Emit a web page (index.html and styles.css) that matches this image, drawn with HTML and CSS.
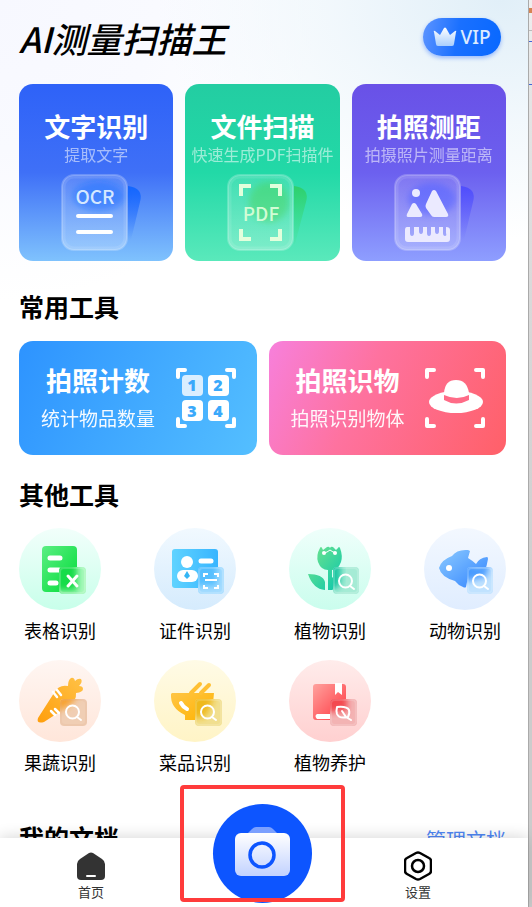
FILE: index.html
```html
<!DOCTYPE html>
<html lang="zh-CN">
<head>
<meta charset="utf-8">
<meta name="viewport" content="width=device-width, initial-scale=1">
<title>AI测量扫描王</title>
<link rel="stylesheet" href="styles.css">
</head>
<body>
<svg class="defs" aria-hidden="true">
  <defs>
    <filter id="soft" x="-30%" y="-30%" width="160%" height="160%"><feGaussianBlur stdDeviation="3"/></filter>
    <linearGradient id="crown" x1="0" y1="0" x2="0" y2="1"><stop offset="0" stop-color="#fff"/><stop offset="1" stop-color="#a9cffd"/></linearGradient>
    <linearGradient id="glass" x1="0" y1="0" x2="0" y2="1"><stop offset="0" stop-color="#fff" stop-opacity=".12"/><stop offset="1" stop-color="#fff" stop-opacity=".24"/></linearGradient>
    <linearGradient id="sheetBlue" x1="0" y1="0" x2="0" y2="1"><stop offset="0" stop-color="#1266ff"/><stop offset="1" stop-color="#1a66ff" stop-opacity="0"/></linearGradient>
    <linearGradient id="sheetGreen" x1="0" y1="0" x2="0" y2="1"><stop offset="0" stop-color="#2ed06b"/><stop offset="1" stop-color="#40de86" stop-opacity=".1"/></linearGradient>
    <linearGradient id="sheetViolet" x1="0" y1="0" x2="0" y2="1"><stop offset="0" stop-color="#4f4dfd"/><stop offset="1" stop-color="#5a5cff" stop-opacity="0"/></linearGradient>
    <linearGradient id="green" x1="0" y1="0" x2="1" y2="1"><stop offset="0" stop-color="#5cee83"/><stop offset="1" stop-color="#00dc37"/></linearGradient>
    <linearGradient id="sky" x1="0" y1="0" x2="1" y2="0"><stop offset="0" stop-color="#60d3ff"/><stop offset="1" stop-color="#38b5ff"/></linearGradient>
    <linearGradient id="plant" x1="0" y1="0" x2="1" y2="1"><stop offset="0" stop-color="#76e58b"/><stop offset="1" stop-color="#08c6ad"/></linearGradient>
    <linearGradient id="fish" x1="0" y1="0" x2="1" y2="1"><stop offset="0" stop-color="#8ccaff"/><stop offset="1" stop-color="#3284ff"/></linearGradient>
    <linearGradient id="orange" x1="1" y1="0" x2="0" y2="1"><stop offset="0" stop-color="#ffc247"/><stop offset="1" stop-color="#ff9e0c"/></linearGradient>
    <linearGradient id="amber" x1="0" y1="0" x2="1" y2="1"><stop offset="0" stop-color="#ffc545"/><stop offset="1" stop-color="#ffb300"/></linearGradient>
    <linearGradient id="red" x1="0" y1="0" x2="1" y2="1"><stop offset="0" stop-color="#ffa29e"/><stop offset="1" stop-color="#ff3640"/></linearGradient>
    <linearGradient id="camera" x1="0" y1="0" x2="0" y2="1"><stop offset="0" stop-color="#fff"/><stop offset="1" stop-color="#c2d2ff"/></linearGradient>
    <clipPath id="badgeClip"><rect x="41" y="39" width="27" height="27" rx="4"/></clipPath>
    <clipPath id="badgeClipLeft"><rect x="40" y="39" width="27" height="27" rx="4"/></clipPath>
    <clipPath id="badgeClipMid"><rect x="43" y="39" width="26" height="27" rx="4"/></clipPath>
    <clipPath id="badgeClipRight"><rect x="44" y="39" width="26" height="27" rx="4"/></clipPath>
    <g id="magnifier" fill="none" stroke="#fff" stroke-width="2" stroke-linecap="round"><circle cx="53.500" cy="52" r="6.500"/><path d="M58 57l4 3"/></g>
    <g id="corners" fill="none" stroke="#fff" stroke-width="4" stroke-linecap="round" stroke-linejoin="round"><path d="M2 9V2h7M51 2h7v7M58 51v7h-7M9 58H2v-7"/></g>
  </defs>
</svg>

<div class="window">
  <div class="app">
    <main class="content">
      <header class="header">
        <h1 class="brand">AI测量扫描王</h1>
        <button class="vip" type="button">
          <svg width="24" height="20" viewBox="0 0 24 20" aria-hidden="true"><path d="M1 5Q0 3 2 4L7 8 11 1q1-1 2 0l4 7 5-4q2-1 1 1l-2 12q0 2-2 2H5q-2 0-2-2z" fill="url(#crown)"/></svg>
          <span>VIP</span>
        </button>
      </header>

      <section class="features">
        <button class="feature feature-ocr" type="button">
          <span class="card-title">文字识别</span>
          <span class="feature-note">提取文字</span>
          <svg class="feature-icon" width="70" height="77" viewBox="0 0 70 77" aria-hidden="true">
            <path d="M67 12q16 2 12 16l-9 38h-3z" fill="url(#sheetBlue)"/>
            <ellipse cx="38" cy="22" rx="26" ry="15" fill="#0864ff" opacity=".7" filter="url(#soft)"/>
            <rect x="1" y="1" width="65" height="75" rx="12" fill="url(#glass)" stroke="#fff" stroke-opacity=".22" stroke-width="2"/>
            <rect x="3" y="3" width="61" height="71" rx="10" fill="none" stroke="#fff" stroke-opacity=".1" stroke-width="3"/>
            <text x="34" y="30" class="glyph-text">OCR</text>
            <path d="M17 42h33M17 58h33" stroke="#fff" stroke-width="4" stroke-linecap="round"/>
          </svg>
        </button>
        <button class="feature feature-scan" type="button">
          <span class="card-title">文件扫描</span>
          <span class="feature-note">快速生成PDF扫描件</span>
          <svg class="feature-icon" width="70" height="77" viewBox="0 0 70 77" aria-hidden="true">
            <path d="M67 12q16 2 12 16l-11 42h-1z" fill="url(#sheetGreen)"/>
            <ellipse cx="42" cy="28" rx="20" ry="20" fill="#2bd262" opacity=".7" filter="url(#soft)"/>
            <rect x="1" y="1" width="65" height="75" rx="12" fill="url(#glass)" stroke="#fff" stroke-opacity=".22" stroke-width="2"/>
            <rect x="3" y="3" width="61" height="71" rx="10" fill="none" stroke="#fff" stroke-opacity=".1" stroke-width="3"/>
            <path d="M14 22V12h10M43 12h10v10M53 55v10H43M24 65H14V55" fill="none" stroke="#e2ffdc" stroke-width="4"/>
            <text x="34" y="47" class="glyph-text glyph-green">PDF</text>
          </svg>
        </button>
        <button class="feature feature-measure" type="button">
          <span class="card-title">拍照测距</span>
          <span class="feature-note">拍摄照片测量距离</span>
          <svg class="feature-icon" width="70" height="77" viewBox="0 0 70 77" aria-hidden="true">
            <path d="M67 12q16 2 12 16l-9 38h-3z" fill="url(#sheetViolet)"/>
            <ellipse cx="38" cy="25" rx="24" ry="16" fill="#4250ff" opacity=".7" filter="url(#soft)"/>
            <rect x="1" y="1" width="65" height="75" rx="12" fill="url(#glass)" stroke="#fff" stroke-opacity=".22" stroke-width="2"/>
            <rect x="3" y="3" width="61" height="71" rx="10" fill="none" stroke="#fff" stroke-opacity=".1" stroke-width="3"/>
            <g fill="#ebeaff"><circle cx="22" cy="19" r="4"/><path d="M18 30q2-2 4 0l6 10q1 3-2 3H14q-2 0-1-3zM38 17q2-2 4 0l12 23q1 3-2 3H40q-2 0-3-2l-5-7q-1-2 0-4z"/><path d="M13 53h3v6q0 3 2 3t2-3v-6h5v4q0 3 2 3t2-3v-4h4v6q0 3 2 3t2-3v-6h4v4q0 3 2 3t2-3v-4h4v6q0 3 2 3t1-3v-6q4 0 4 3v9q0 3-3 3H14q-3 0-3-3v-9q0-3 2-3z"/></g>
          </svg>
        </button>
      </section>

      <h2 class="section-title">常用工具</h2>
      <section class="commons">
        <button class="common common-count" type="button">
          <span class="common-text"><span class="card-title">拍照计数</span><span class="common-note">统计物品数量</span></span>
          <svg width="60" height="60" viewBox="0 0 60 60" aria-hidden="true">
            <use href="#corners"/>
            <g fill="#fff"><rect x="6" y="7" width="21" height="21" rx="4" fill="#d9eeff"/><rect x="32" y="7" width="21" height="21" rx="4"/><rect x="6" y="32" width="21" height="21" rx="4"/><rect x="32" y="32" width="21" height="21" rx="4"/></g>
            <g class="count-digits"><text x="16" y="23">1</text><text x="42" y="23">2</text><text x="16" y="49">3</text><text x="42" y="49">4</text></g>
          </svg>
        </button>
        <button class="common common-object" type="button">
          <span class="common-text"><span class="card-title">拍照识物</span><span class="common-note">拍照识别物体</span></span>
          <svg width="60" height="60" viewBox="0 0 60 60" aria-hidden="true">
            <use href="#corners"/>
            <ellipse cx="31" cy="34" rx="27" ry="11" fill="#fff"/>
            <path d="M19 25v7q12 7 25 0v-7z" fill="#ff6b87"/>
            <path d="M19 25q1-13 12-13t13 13v2q-12 6-25 0z" fill="#fff"/>
          </svg>
        </button>
      </section>

      <h2 class="section-title">其他工具</h2>
      <section class="tools">
        <button class="tool" type="button">
          <svg class="disc disc-mint" viewBox="0 0 82 82" aria-hidden="true">
            <rect x="23" y="18" width="35" height="46" rx="4" fill="url(#green)"/>
            <path d="M31 30h10M31 42h9M31 55h6" stroke="#fff" stroke-width="5" stroke-linecap="round"/>
            <rect x="40" y="39" width="27" height="27" rx="4" fill="#a6f8ba"/>
            <g clip-path="url(#badgeClipLeft)"><rect x="36" y="34" width="22" height="29" fill="#18dc49" filter="url(#soft)"/></g>
            <rect x="41" y="40" width="25" height="25" rx="4" fill="none" stroke="#fff" stroke-opacity=".18" stroke-width="2"/>
            <path d="M49 48l9 10M58 48l-9 10" stroke="#fff" stroke-width="3" stroke-linecap="round"/>
          </svg>
          <span>表格识别</span>
        </button>
        <button class="tool" type="button">
          <svg class="disc disc-sky" viewBox="0 0 82 82" aria-hidden="true">
            <rect x="18" y="21" width="46" height="39" rx="3" fill="url(#sky)"/>
            <circle cx="33" cy="34" r="6" fill="#fff"/><rect x="23" y="42" width="21" height="12" rx="6" fill="#fff"/>
            <path d="M33 43l3 5-3 3-3-3z" fill="#35b6f5"/><path d="M47 33h10" stroke="#fff" stroke-width="5" stroke-linecap="round"/>
            <rect x="44" y="39" width="26" height="27" rx="4" fill="#a5dcff"/>
            <g clip-path="url(#badgeClipRight)"><rect x="40" y="34" width="23" height="24" fill="#55bfff" filter="url(#soft)"/></g>
            <rect x="45" y="40" width="24" height="25" rx="4" fill="none" stroke="#fff" stroke-opacity=".18" stroke-width="2"/>
            <path d="M50 49v-3h4M60 46h4v3M64 57v3h-4M54 60h-4v-3M51 52h12" fill="none" stroke="#fff" stroke-width="2"/>
          </svg>
          <span>证件识别</span>
        </button>
        <button class="tool" type="button">
          <svg class="disc disc-teal" viewBox="0 0 82 82" aria-hidden="true">
            <path d="M31 20q1-2 2 0l1 2 4-3q2-1 3 1 1-2 3-1l3 3 2-2q1-2 2 0 3 8 1 14-3 8-9 8v8q3-4 7-6v11q-4 6-7 7h-4V42q-7 0-10-8-2-7 2-14zM19 46q15 0 17 8v8q-12-1-17-16z" fill="url(#plant)"/>
            <path d="M35 25l3-1 3-2 3 2 3 1" fill="none" stroke="#fff" stroke-width="1"/><g fill="#fff"><circle cx="35" cy="25" r="2"/><circle cx="46" cy="25" r="2"/></g>
            <rect x="44" y="39" width="26" height="27" rx="4" fill="#a5ebd5"/>
            <g clip-path="url(#badgeClipRight)"><path d="M38 34h14v22l-6 5h-8z" fill="#1ec7a2" filter="url(#soft)"/></g>
            <rect x="45" y="40" width="24" height="25" rx="4" fill="none" stroke="#fff" stroke-opacity=".18" stroke-width="2"/>
            <use href="#magnifier" x="3" y="1"/>
          </svg>
          <span>植物识别</span>
        </button>
        <button class="tool" type="button">
          <svg class="disc disc-blue" viewBox="0 0 82 82" aria-hidden="true">
            <path d="M15 40q2-8 13-12 5-7 16-6l2 1-2 7q5 3 8 6 3-6 11-7 1 0 1 2-1 6-3 12l2 10-12-5q-4 4-8 6l-1 5q-1 1-3 0-5-2-8-6-14-4-16-13z" fill="url(#fish)"/>
            <circle cx="25" cy="40" r="3" fill="#fff"/>
            <rect x="43" y="39" width="26" height="27" rx="4" fill="#c0e2ff"/>
            <g clip-path="url(#badgeClipMid)"><path d="M38 34l18 5 10-6-4 16-12 2-12 4z" fill="#489bff" filter="url(#soft)"/></g>
            <rect x="44" y="40" width="24" height="25" rx="4" fill="none" stroke="#fff" stroke-opacity=".18" stroke-width="2"/>
            <use href="#magnifier" x="2" y="1"/>
          </svg>
          <span>动物识别</span>
        </button>
        <button class="tool" type="button">
          <svg class="disc disc-peach" viewBox="0 0 82 82" aria-hidden="true">
            <path d="M19 58l16-25q5-9 14-7 0-6 3-8 3-1 4 3 3-3 6-2 2 3-2 7 4 0 4 3 0 3-7 4 1 9-9 14L25 62q-8 2-6-4z" fill="url(#orange)"/>
            <path d="M34 32l4 5M38 30l4 5M32 51l4 4M36 49l4 4" stroke="#fff" stroke-width="2.500" stroke-linecap="round"/>
            <rect x="41" y="39" width="27" height="27" rx="4" fill="#f0ceb4"/>
            <g clip-path="url(#badgeClip)"><path d="M35 35h24q-4 9-20 17z" fill="#f7a330" filter="url(#soft)"/></g>
            <rect x="42" y="40" width="25" height="25" rx="4" fill="none" stroke="#dba986" stroke-opacity=".15" stroke-width="2"/>
            <use href="#magnifier"/>
          </svg>
          <span>果蔬识别</span>
        </button>
        <button class="tool" type="button">
          <svg class="disc disc-lemon" viewBox="0 0 82 82" aria-hidden="true">
            <path d="M18 33h42q0 14-10 22v5H31v-5Q16 48 17 34z" fill="url(#amber)"/>
            <path d="M37 33l9-9M47 33l8-8" stroke="#ffc033" stroke-width="4" stroke-linecap="round"/>
            <path d="M27 43q2 4 6 6" fill="none" stroke="#fff" stroke-width="4" stroke-linecap="round"/>
            <rect x="41" y="39" width="27" height="27" rx="4" fill="#f1df8f"/>
            <g clip-path="url(#badgeClip)"><path d="M36 34h24q-2 14-10 24H36z" fill="#efb91c" filter="url(#soft)"/></g>
            <rect x="42" y="40" width="25" height="25" rx="4" fill="none" stroke="#fff" stroke-opacity=".15" stroke-width="2"/>
            <use href="#magnifier"/>
          </svg>
          <span>菜品识别</span>
        </button>
        <button class="tool" type="button">
          <svg class="disc disc-rose" viewBox="0 0 82 82" aria-hidden="true">
            <rect x="24" y="24" width="33" height="36" rx="3" fill="url(#red)"/>
            <path d="M46 23h7v12l-4-3-3 3z" fill="#fff"/><path d="M57 54H28q-3 2 0 5h29z" fill="#fff"/>
            <rect x="41" y="39" width="27" height="27" rx="4" fill="#f3b3b3"/>
            <g clip-path="url(#badgeClip)"><path d="M36 34h22v18H36z" fill="#f34a50" filter="url(#soft)"/></g>
            <rect x="42" y="40" width="25" height="25" rx="4" fill="none" stroke="#fff" stroke-opacity=".15" stroke-width="2"/>
            <path d="M48 47q10-1 12 3 1 3-1 7-9 2-11-3-1-3 0-7zM53 51l4 6 5 3" fill="none" stroke="#fff" stroke-width="2" stroke-linecap="round" stroke-linejoin="round"/>
          </svg>
          <span>植物养护</span>
        </button>
      </section>

      <div class="docs">
        <h2 class="section-title">我的文档</h2>
        <a class="docs-link" href="#documents">管理文档</a>
      </div>
    </main>

    <nav class="tabs">
      <a class="tab" href="#home">
        <svg width="28" height="30" viewBox="0 0 28 30" aria-hidden="true"><path d="M12 2q2-1 4 0l9 6q3 2 3 5v12q0 4-4 4H4q-4 0-4-4V13q0-3 3-5z" fill="#333"/><path d="M10 25h8" stroke="#fff" stroke-width="2" stroke-linecap="round"/></svg>
        <span>首页</span>
      </a>
      <a class="tab" href="#settings">
        <svg width="28" height="30" viewBox="0 0 28 30" aria-hidden="true"><g fill="none" stroke="#000" stroke-width="2.500" stroke-linejoin="round"><path d="M12 2q2-1 4 0l9 5q2 1 2 3v10q0 2-2 3l-9 5q-2 1-4 0l-9-5q-2-1-2-3V10q0-2 2-3z"/><circle cx="14" cy="15" r="6"/></g></svg>
        <span>设置</span>
      </a>
      <button class="shutter" type="button" aria-label="拍照">
        <svg width="55" height="49" viewBox="0 0 55 49" aria-hidden="true"><path d="M13 6l4-4q2-2 4-2h13q2 0 4 2l4 4z" fill="#7ba0ff"/><rect y="6" width="55" height="43" rx="6" fill="url(#camera)"/><circle cx="27" cy="28" r="12" fill="none" stroke="#0d55ff" stroke-width="3.500"/></svg>
      </button>
      <div class="highlight"></div>
    </nav>
  </div>
  <div class="edge"></div>
</div>
</body>
</html>
```
FILE: styles.css
```css
* { box-sizing: border-box; }

body {
  margin: 0;
  color: #000;
  background: #fff;
  font-family: "Noto Sans CJK SC", "Noto Sans", sans-serif;
}

h1, h2 { margin: 0; }

button {
  margin: 0;
  padding: 0;
  border: 0;
  background: none;
  color: inherit;
  font: inherit;
  cursor: pointer;
}

a { text-decoration: none; }

.defs {
  position: absolute;
  width: 0;
  height: 0;
}

.window {
  display: flex;
  height: 100vh;
  overflow: hidden;
}

.app {
  flex: 1;
  min-width: 0;
  display: flex;
  flex-direction: column;
  background:
    radial-gradient(ellipse 65% 240px at 95% 0, #e1eff8 0, rgba(236, 245, 251, 0.7) 50%, rgba(255, 255, 255, 0) 100%),
    radial-gradient(ellipse 60% 300px at 0 0, #f7f8ff 0, #f9faff 50%, rgba(255, 255, 255, 0) 100%),
    #fff;
}

.edge {
  width: 4px;
  border-left: 1px solid #aaa;
  background:
    linear-gradient(#d68454, #d68454) 0 8px / 3px 5px no-repeat,
    linear-gradient(#bbb, #bbb) 0 30px / 3px 1px no-repeat,
    linear-gradient(#4265d8, #4265d8) 0 41px / 3px 1px no-repeat,
    linear-gradient(#4265d8, #4265d8) 0 84px / 3px 1px no-repeat,
    linear-gradient(#efefef 0, #e5e5e5 84px, #d9d9d9 300px, #ccc 650px);
}

.content {
  flex: 1;
  min-height: 0;
  overflow: hidden;
  padding: 16px 22px 0 19px;
}

.header {
  display: flex;
  align-items: center;
  justify-content: space-between;
  height: 48px;
  margin-bottom: 20px;
  padding-right: 5px;
}

.brand {
  padding-bottom: 4px;
  font-size: 35px;
  line-height: 46px;
  font-weight: 500;
  font-style: italic;
}

.vip {
  display: flex;
  align-items: center;
  justify-content: center;
  gap: 3px;
  width: 78px;
  height: 38px;
  margin-bottom: 6px;
  border-radius: 19px;
  background: linear-gradient(100deg, #5d94ff 0, #1a70ff 45%, #0868ff 100%);
  box-shadow: 0 2px 4px rgba(30, 100, 255, 0.4);
  color: #dcebff;
  font: 500 19px/38px "Noto Sans", sans-serif;
}

.features,
.commons {
  display: grid;
  gap: 12px;
}

.features { grid-template-columns: repeat(3, 1fr); }
.commons { grid-template-columns: repeat(2, 1fr); }

.feature {
  display: flex;
  flex-direction: column;
  align-items: center;
  padding: 26px 0 10px;
  border-radius: 14px;
  color: #fff;
  white-space: nowrap;
}

.feature-ocr { background: linear-gradient(#2e62f8 0, #3f70f7 50%, #7fc2fd 100%); }
.feature-scan { background: linear-gradient(#23cda2 0, #22d9a7 50%, #5ae9bb 100%); }
.feature-measure { background: linear-gradient(#6951e7 0, #6c60ef 50%, #8e9eff 100%); }

.card-title {
  font-size: 26px;
  line-height: 32px;
  font-weight: 700;
}

.feature-note {
  font-size: 16px;
  line-height: 24px;
  opacity: 0.55;
}

.feature-icon {
  margin-top: 8px;
  overflow: visible;
}

.glyph-text {
  fill: #d5e8ff;
  font-size: 19px;
  font-weight: 500;
  text-anchor: middle;
}

.glyph-green { fill: #d2fcd5; }

.section-title {
  font-size: 25px;
  line-height: 32px;
  font-weight: 700;
}

.features + .section-title { margin: 29px 0 19px; }
.commons + .section-title { margin: 23px 0 18px; }

.common {
  display: flex;
  align-items: center;
  justify-content: space-between;
  height: 114px;
  padding: 0 21px 0 22px;
  border-radius: 14px;
  color: #fff;
  white-space: nowrap;
}

.common-count { background: linear-gradient(115deg, #2d93ff, #54bfff); }
.common-object { background: linear-gradient(115deg, #f780dc 0, #fe729f 40%, #ff6068 100%); }

.common-text {
  display: flex;
  flex-direction: column;
  align-items: center;
  gap: 8px;
}

.common-note {
  font-size: 19px;
  line-height: 28px;
  opacity: 0.95;
}

.count-digits {
  fill: #3aa9fb;
  font: 800 16px "Open Sans", sans-serif;
  text-anchor: middle;
}

.tools {
  display: grid;
  grid-template-columns: repeat(4, 82px);
  justify-content: space-between;
  row-gap: 17px;
}

.tool {
  display: flex;
  flex-direction: column;
  align-items: center;
  gap: 7px;
  font-size: 18px;
  line-height: 26px;
  white-space: nowrap;
}

.disc {
  width: 82px;
  height: 82px;
  border-radius: 50%;
}

.disc-mint { background: linear-gradient(#f2fffb, #c8ffea); }
.disc-sky { background: linear-gradient(#f1f9ff, #d5ebfd); }
.disc-teal { background: linear-gradient(#effffb, #cafded); }
.disc-blue { background: linear-gradient(#f3f8ff, #e0edff); }
.disc-peach { background: linear-gradient(#fff6f2, #ffe6da); }
.disc-lemon { background: linear-gradient(#fffbe6, #fff4c6); }
.disc-rose { background: linear-gradient(#ffeceb, #ffd0d0); }

.docs {
  display: flex;
  align-items: flex-start;
  justify-content: space-between;
  margin-top: 46px;
}

.docs-link {
  padding-top: 3px;
  color: #4f87f5;
  font-size: 20px;
  line-height: 32px;
}

.tabs {
  position: relative;
  display: flex;
  justify-content: space-between;
  height: 69px;
  padding-right: 19px;
  background: #fff;
  box-shadow: 0 -1px 14px rgba(0, 0, 0, 0.16);
}

.tab {
  display: flex;
  flex-direction: column;
  align-items: center;
  width: 182px;
  padding-top: 13px;
  color: #333;
  font-size: 13px;
  line-height: 22px;
}

.shutter {
  position: absolute;
  left: 50%;
  top: -34px;
  display: grid;
  place-items: center;
  width: 99px;
  height: 99px;
  margin-left: -51px;
  padding-bottom: 4px;
  border-radius: 50%;
  background: #0d55ff;
}

.highlight {
  position: absolute;
  left: 50%;
  top: -53px;
  width: 165px;
  height: 117px;
  margin-left: -84px;
  border: 4px solid #ff3b3b;
  border-radius: 4px;
  pointer-events: none;
}
```
